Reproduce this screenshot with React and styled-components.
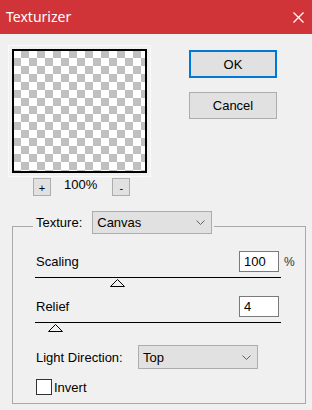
import React from 'react';
import styled, { createGlobalStyle } from 'styled-components';

const GlobalStyle = createGlobalStyle`
  body {
    margin: 0;
    background: #f0f0f0;
    font-family: "Liberation Sans", Arial, sans-serif;
    font-size: 13px;
    color: #000;
  }
`;

const Window = styled.div`
  width: 312px;
  height: 410px;
  background: #f0f0f0;
  overflow: hidden;
`;

const TitleBar = styled.div`
  height: 34px;
  background: #d13438;
  display: flex;
  align-items: center;
  justify-content: space-between;
  padding: 0 8px 0 6px;
  box-sizing: border-box;
`;

const Title = styled.div`
  font-family: "Noto Sans", "Open Sans", sans-serif;
  font-size: 14px;
  color: #fff;
  margin-top: -1px;
`;

const Top = styled.div`
  display: flex;
  padding: 11px 0 0 8px;
`;

const PreviewColumn = styled.div`
  display: flex;
  flex-direction: column;
`;

const PreviewWell = styled.div`
  border: 1px solid #fafafa;
  padding: 3px;
`;

const PreviewFrame = styled.div`
  width: 135px;
  height: 124px;
  box-sizing: border-box;
  border: 2px solid #000;
  background: repeating-conic-gradient(#c0c0c0 0 25%, #fff 0 50%) -1px -1px / 16px 16px;
`;

const ZoomRow = styled.div`
  display: flex;
  align-items: center;
  padding-left: 25px;
  margin-top: 1px;
`;

const ZoomButton = styled.div`
  width: 18px;
  height: 18px;
  box-sizing: border-box;
  background: #e1e1e1;
  border: 1px solid #adadad;
  display: flex;
  align-items: center;
  justify-content: center;
  font-size: 11px;
  line-height: 1;
  padding-top: 2px;
`;

const ZoomValue = styled.span`
  margin: -6px 15px 0 13px;
`;

const ButtonColumn = styled.div`
  display: flex;
  flex-direction: column;
  gap: 14px;
  margin: 5px 0 0 38px;
`;

const Button = styled.div`
  width: 88px;
  height: ${(p) => (p.$default ? '28px' : '27px')};
  box-sizing: border-box;
  background: #e1e1e1;
  border: ${(p) => (p.$default ? '2px solid #0078d7' : '1px solid #adadad')};
  display: flex;
  align-items: center;
  justify-content: center;
`;

const Group = styled.fieldset`
  margin: 15px 0 0 12px;
  width: 294px;
  box-sizing: border-box;
  border: 1px solid #a9a9a9;
  padding: 10px 13px 8px 23px;
`;

const Legend = styled.legend`
  display: flex;
  align-items: center;
  margin-left: -3px;
  padding: 0 2px 7px 3px;
`;

const Select = styled.div`
  width: ${(p) => p.$width}px;
  height: ${(p) => p.$height}px;
  box-sizing: border-box;
  background: #e1e1e1;
  border: 1px solid #adadad;
  display: flex;
  align-items: center;
  justify-content: space-between;
  padding: 0 6px 0 4px;
  margin-left: ${(p) => p.$offset || 0}px;
`;

const Row = styled.div`
  display: flex;
  align-items: center;
  margin-top: ${(p) => p.$gap || 0}px;
`;

const Label = styled.span`
  flex: ${(p) => (p.$grow ? 1 : 'none')};
  width: ${(p) => (p.$width ? `${p.$width}px` : 'auto')};
`;

const NumberBox = styled.div`
  width: 40px;
  height: 21px;
  box-sizing: border-box;
  background: #fff;
  border: 1px solid #7a7a7a;
  padding: 0 4px;
  display: flex;
  align-items: center;
`;

const Unit = styled.span`
  width: 13px;
  padding-left: 5px;
  box-sizing: border-box;
  font-size: 12px;
  color: #333;
`;

const Track = styled.div`
  position: relative;
  width: 246px;
  height: 13px;
  margin: 5px 0 0 -1px;
  border-top: 1px solid #000;
`;

const Thumb = styled.svg`
  position: absolute;
  top: 0;
`;

const CheckBox = styled.div`
  width: 16px;
  height: 16px;
  box-sizing: border-box;
  background: #fff;
  border: 1px solid #333;
  margin-right: 2px;
`;

const Chevron = () => (
  <svg width="9" height="5" viewBox="0 0 9 5">
    <polyline points="0.5,0.5 4.5,4.5 8.5,0.5" fill="none" stroke="#606060" strokeWidth="1" />
  </svg>
);

// thumb travel is 230px along the 246px track
const Slider = ({ percent }) => (
  <Track>
    <Thumb width="16" height="9" viewBox="0 0 16 9" style={{ left: Math.round((percent / 100) * 230) + 'px' }}>
      <polygon points="0.5,8.5 7.5,1.5 14.5,8.5" fill="#f0f0f0" stroke="#000" strokeWidth="1" />
    </Thumb>
  </Track>
);

const App = () => {
  return (
    <Window>
      <GlobalStyle />
      <TitleBar>
        <Title>Texturizer</Title>
        <svg width="11" height="11" viewBox="0 0 11 11">
          <path d="M0.5 0.5 L10.5 10.5 M10.5 0.5 L0.5 10.5" stroke="#fff" strokeWidth="1.2" />
        </svg>
      </TitleBar>
      <Top>
        <PreviewColumn>
          <PreviewWell>
            <PreviewFrame />
          </PreviewWell>
          <ZoomRow>
            <ZoomButton>+</ZoomButton>
            <ZoomValue>100%</ZoomValue>
            <ZoomButton>-</ZoomButton>
          </ZoomRow>
        </PreviewColumn>
        <ButtonColumn>
          <Button $default>OK</Button>
          <Button>Cancel</Button>
        </ButtonColumn>
      </Top>
      <Group>
        <Legend>
          <span>Texture:</span>
          <Select $width={120} $height={23} $offset={10}>
            <span>Canvas</span>
            <Chevron />
          </Select>
        </Legend>
        <Row>
          <Label $grow>Scaling</Label>
          <NumberBox>100</NumberBox>
          <Unit>%</Unit>
        </Row>
        <Slider percent={32.6} />
        <Row $gap={5}>
          <Label $grow>Relief</Label>
          <NumberBox>4</NumberBox>
          <Unit />
        </Row>
        <Slider percent={5.7} />
        <Row $gap={9}>
          <Label $width={102}>Light Direction:</Label>
          <Select $width={120} $height={24}>
            <span>Top</span>
            <Chevron />
          </Select>
        </Row>
        <Row $gap={10}>
          <CheckBox />
          <span>Invert</span>
        </Row>
      </Group>
    </Window>
  );
};

export default App;
